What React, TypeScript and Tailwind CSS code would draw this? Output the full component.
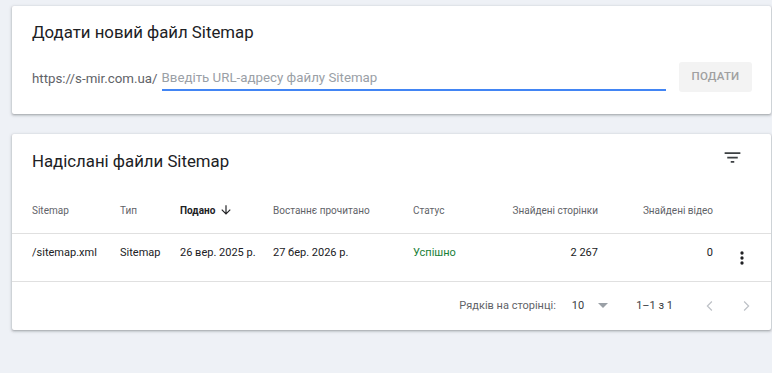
import React from 'react';

const font = { fontFamily: 'Roboto, "Noto Sans", sans-serif' };

function FilterIcon() {
	return (
		<svg width="21" height="21" viewBox="0 0 24 24" fill="#3c4043">
			<path d="M10 18h4v-2h-4v2zM3 6v2h18V6H3zm3 7h12v-2H6v2z" />
		</svg>
	);
}

function MoreIcon() {
	return (
		<svg width="20" height="20" viewBox="0 0 24 24" fill="#202124">
			<circle cx="12" cy="6" r="2" />
			<circle cx="12" cy="12" r="2" />
			<circle cx="12" cy="18" r="2" />
		</svg>
	);
}

function ArrowDown() {
	return (
		<svg width="14" height="14" viewBox="0 0 24 24" fill="#202124">
			<path d="M20 12l-1.41-1.41L13 16.17V4h-2v12.17l-5.58-5.59L4 12l8 8 8-8z" />
		</svg>
	);
}

function Chevron({ dir }: { dir: 'left' | 'right' }) {
	return (
		<svg width="18" height="18" viewBox="0 0 24 24" fill="none" stroke="#bdc1c6" strokeWidth="1.6">
			{dir === 'left' ? <path d="M14.5 6l-6 6 6 6" /> : <path d="M9.5 6l6 6-6 6" />}
		</svg>
	);
}

const card =
	'bg-white rounded-[2px] shadow-[0_1px_2px_0_rgba(60,64,67,0.3),0_1px_3px_1px_rgba(60,64,67,0.15)]';

const cols = 'grid grid-cols-[88px_60px_93px_140px_87px_98px_115px_58px] pl-[20px]';

export default function App() {
	return (
		<div className="min-h-[373px] bg-[#eef1f6] pt-[6px] pl-[12px] pr-[1px]" style={font}>
			{/* add sitemap */}
			<div className={`${card} pt-[14px] pb-[22px] pl-[20px] pr-[19px]`}>
				<h2 className="text-[16.8px] leading-[24px] text-[#202124]">Додати новий файл Sitemap</h2>
				<div className="mt-[18px] flex items-center">
					<span className="text-[13.3px] text-[#5f6368] mt-[4px]">https://s-mir.com.ua/</span>
					<div className="ml-[4px] flex-1 border-b-2 border-[#4285f4] h-[27px] flex items-end pb-[1px]">
						<span className="text-[13.3px] leading-[20px] text-[#9aa0a6]">Введіть URL-адресу файлу Sitemap</span>
					</div>
					<button className="ml-[13px] w-[73px] h-[30px] rounded-[3px] bg-[#f3f3f3] text-[11.5px] font-medium text-[#a0a0a0] tracking-[0.2px]">
						ПОДАТИ
					</button>
				</div>
			</div>

			{/* submitted sitemaps */}
			<div className={`${card} mt-[20px]`}>
				<div className="pt-[15px] pl-[20px] pr-[28px] flex items-center justify-between">
					<h2 className="text-[16.8px] leading-[24px] text-[#202124]">Надіслані файли Sitemap</h2>
					<div className="-mt-[7px]">
						<FilterIcon />
					</div>
				</div>

				<div className={`${cols} mt-[14px] h-[47px] items-center text-[10px] text-[#5f6368] border-b border-[#e0e0e0]`}>
					<div>Sitemap</div>
					<div>Тип</div>
					<div className="flex items-center gap-[4px] font-bold text-[#202124]">
						Подано <ArrowDown />
					</div>
					<div>Востаннє прочитано</div>
					<div>Статус</div>
					<div className="text-right">Знайдені сторінки</div>
					<div className="text-right">Знайдені відео</div>
					<div />
				</div>

				<div className={`${cols} h-[48px] items-center text-[11px] text-[#202124] border-b border-[#e0e0e0] pb-[8px]`}>
					<div>/sitemap.xml</div>
					<div>Sitemap</div>
					<div>26 вер. 2025 р.</div>
					<div>27 бер. 2026 р.</div>
					<div className="text-[#188038]">Успішно</div>
					<div className="text-right">2 267</div>
					<div className="text-right">0</div>
					<div className="flex justify-center mt-[8px]">
						<MoreIcon />
					</div>
				</div>

				<div className="h-[48px] flex items-center justify-end text-[11px] text-[#5f6368] pr-[16px]">
					<span>Рядків на сторінці:</span>
					<span className="ml-[16px] text-[#3c4043]">10</span>
					<svg className="ml-[14px]" width="10" height="6" viewBox="0 0 10 6" fill="#9aa0a6">
						<path d="M0 0h10L5 5z" />
					</svg>
					<span className="ml-[28px] text-[#3c4043]">1–1 з 1</span>
					<div className="ml-[28px] flex items-center gap-[18px]">
						<Chevron dir="left" />
						<Chevron dir="right" />
					</div>
				</div>
			</div>
		</div>
	);
}
